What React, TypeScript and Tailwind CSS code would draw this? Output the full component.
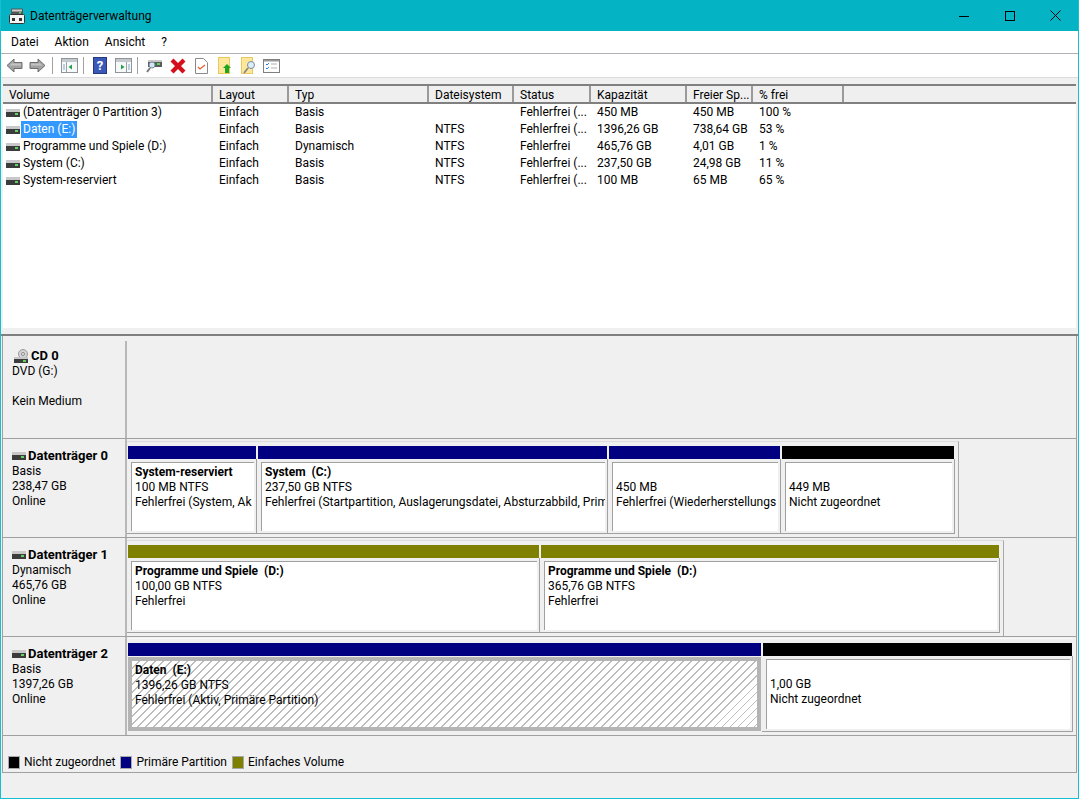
const font = "font-['Roboto',sans-serif]";

const HddIcon = () => (
  <svg width="14" height="8" viewBox="0 0 14 8" className="shrink-0">
    <rect x="0" y="0" width="14" height="3" fill="#c8c8c8" />
    <rect x="0" y="3" width="14" height="5" fill="#3c3c3c" />
    <rect x="9" y="4" width="3" height="2" fill="#5fd35f" />
  </svg>
);

const CdIcon = () => (
  <svg width="15" height="14" viewBox="0 0 15 14" className="shrink-0">
    <circle cx="9" cy="5" r="4.5" fill="#d4d4d4" stroke="#9a9a9a" />
    <circle cx="9" cy="5" r="1.5" fill="#f4f4f4" stroke="#888" />
    <rect x="0" y="8" width="14" height="2" fill="#c8c8c8" />
    <rect x="0" y="10" width="14" height="4" fill="#3c3c3c" />
    <rect x="9" y="11" width="3" height="2" fill="#5fd35f" />
  </svg>
);

const Sep = ({ className }: { className: string }) => <div className={`w-[1px] h-[17px] bg-[#a0a0a0] shrink-0 ${className}`} />;

const WinIcon = ({ flip, className }: { flip?: boolean; className: string }) => (
  <svg width="17" height="15" viewBox="0 0 17 15" className={`shrink-0 ${className}`}>
    <rect x="0.5" y="0.5" width="16" height="14" fill="#f6f8fa" stroke="#8f9499" />
    <rect x="1" y="1" width="15" height="3" fill="#c4c9ce" />
    <line x1={flip ? 11.5 : 5.5} y1="4" x2={flip ? 11.5 : 5.5} y2="14" stroke="#9aa0a6" />
    <path d={flip ? 'M6 6.5l3.5 2.5L6 11.5z' : 'M11 6.5L7.5 9l3.5 2.5z'} fill="#24a148" />
    <path d={flip ? 'M13 7h2M13 9h2M13 11h2' : 'M2 7h2M2 9h2M2 11h2'} stroke="#7fa8c9" />
  </svg>
);

const Toolbar = () => (
  <div className="flex items-center h-[23px] pl-[5px] bg-white">
    <svg width="17" height="15" viewBox="0 0 17 15" className="shrink-0">
      <path d="M1 7.5L8 1v3.5h8v6H8V14z" fill="#a2a2a2" stroke="#6e6e6e" />
      <path d="M3.5 7.5L7 4.500v1h8v2H7z" fill="#c4c4c4" />
    </svg>
    <svg width="17" height="15" viewBox="0 0 17 15" className="ml-[6px] shrink-0">
      <path d="M16 7.5L9 1v3.500H1v6h8V14z" fill="#a2a2a2" stroke="#6e6e6e" />
      <path d="M13.500 7.500L10 4.500v1H2v2h8z" fill="#c4c4c4" />
    </svg>
    <Sep className="ml-[6px]" />
    <WinIcon className="ml-[8px]" />
    <Sep className="ml-[5px]" />
    <div className="ml-[9px] w-[14px] h-[17px] shrink-0 bg-[#3a58b8] border border-[#26387e] text-white text-[13px] leading-[15px] font-bold text-center">?</div>
    <WinIcon flip className="ml-[8px]" />
    <Sep className="ml-[5px]" />
    <svg width="16" height="15" viewBox="0 0 16 15" className="ml-[8px] shrink-0">
      <rect x="2" y="4" width="14" height="5" fill="#5a5a5a" />
      <rect x="2" y="2" width="14" height="2" fill="#c8c8c8" />
      <rect x="11" y="5" width="3" height="2" fill="#5fd35f" />
      <circle cx="6" cy="7" r="3" fill="#cfe6f5" stroke="#7a8894" />
      <line x1="4" y1="10" x2="1" y2="14" stroke="#7a7a7a" strokeWidth="2" />
    </svg>
    <svg width="16" height="16" viewBox="0 0 16 16" className="ml-[8px] shrink-0">
      <path d="M0.500 3.500l3-3L8 5l4.500-4.500 3 3L11 8l4.500 4.500-3 3L8 11l-4.500 4.500-3-3L5 8z" fill="#d4101c" />
    </svg>
    <svg width="13" height="16" viewBox="0 0 13 16" className="ml-[9px] shrink-0">
      <path d="M0.500 0.500h8l4 4v11h-12z" fill="#fff" stroke="#8a8a8a" />
      <path d="M3 9l2 2 5-4" fill="none" stroke="#e8602c" strokeWidth="1.3" />
    </svg>
    <svg width="14" height="17" viewBox="0 0 14 17" className="ml-[10px] shrink-0">
      <rect x="0.500" y="0.500" width="11" height="16" fill="#fde79a" stroke="#e8c860" />
      <path d="M9 7l4 4h-2v5H7v-5H5z" fill="#1fa51f" />
    </svg>
    <svg width="15" height="17" viewBox="0 0 15 17" className="ml-[9px] shrink-0">
      <rect x="0.500" y="0.500" width="11" height="16" fill="#fde79a" stroke="#e8c860" />
      <circle cx="10" cy="8" r="3.500" fill="#dceefa" stroke="#7a8a9a" />
      <line x1="7" y1="11" x2="3" y2="16" stroke="#8a8a8a" strokeWidth="2" />
    </svg>
    <svg width="17" height="14" viewBox="0 0 17 14" className="ml-[7px] shrink-0">
      <rect x="0.500" y="0.500" width="16" height="13" fill="#fff" stroke="#7f7f7f" />
      <rect x="1" y="1" width="15" height="1.500" fill="#9a9a9a" />
      <path d="M3 5l1 1 2-2M3 9l1 1 2-2" fill="none" stroke="#2b7fd8" />
      <path d="M8 5h6M8 9h6" stroke="#b0b0b0" />
    </svg>
  </div>
);

const columns = [
  { name: 'Volume', w: 'w-[210px]' },
  { name: 'Layout', w: 'w-[76px]' },
  { name: 'Typ', w: 'w-[140px]' },
  { name: 'Dateisystem', w: 'w-[85px]' },
  { name: 'Status', w: 'w-[77px]' },
  { name: 'Kapazität', w: 'w-[96px]' },
  { name: 'Freier Sp...', w: 'w-[66px]' },
  { name: '% frei', w: 'w-[91px]' },
];

const rows = [
  ['(Datenträger 0 Partition 3)', 'Einfach', 'Basis', '', 'Fehlerfrei (...', '450 MB', '450 MB', '100 %'],
  ['Daten (E:)', 'Einfach', 'Basis', 'NTFS', 'Fehlerfrei (...', '1396,26 GB', '738,64 GB', '53 %'],
  ['Programme und Spiele (D:)', 'Einfach', 'Dynamisch', 'NTFS', 'Fehlerfrei', '465,76 GB', '4,01 GB', '1 %'],
  ['System (C:)', 'Einfach', 'Basis', 'NTFS', 'Fehlerfrei (...', '237,50 GB', '24,98 GB', '11 %'],
  ['System-reserviert', 'Einfach', 'Basis', 'NTFS', 'Fehlerfrei (...', '100 MB', '65 MB', '65 %'],
];

const VolumeList = () => (
  <div className="h-[244px] shrink-0 mx-[2px] bg-white flex flex-col">
    <div className="flex h-[20px] bg-[#efefef] border-t-2 border-b-2 border-t-[#808080] border-b-[#808080]">
      {columns.map((c) => (
        <div key={c.name} className={`${c.w} pl-[6px] border-r-2 border-[#9a9a9a] leading-[18px] truncate`}>{c.name}</div>
      ))}
    </div>
    <div>
      {rows.map((r, i) => (
        <div key={r[0]} className="flex h-[17px] leading-[17px]">
          {r.map((cell, j) =>
            j === 0 ? (
              <div key={j} className="w-[210px] flex items-center pl-[3px]">
                <HddIcon />
                {i === 1 ? (
                  <span className="ml-[1px] px-[2px] bg-[#3399ff] text-white">{cell}</span>
                ) : (
                  <span className="ml-[3px]">{cell}</span>
                )}
              </div>
            ) : (
              <div key={j} className={`${columns[j].w} pl-[6px] truncate`}>{cell}</div>
            ),
          )}
        </div>
      ))}
    </div>
  </div>
);

const colors = { navy: 'bg-[#000080]', black: 'bg-black', olive: 'bg-[#808000]' };

type Part = {
  w: string;
  color: keyof typeof colors;
  title?: string;
  lines: string[];
  hatched?: boolean;
};

const PartText = ({ p }: { p: Part }) => (
  <>
    <div className="h-[15px] leading-[15px] font-bold whitespace-pre">{p.title ?? ''}</div>
    {p.lines.map((l) => (
      <div key={l} className="h-[15px] leading-[15px]">{l}</div>
    ))}
  </>
);

const Partition = ({ p }: { p: Part }) => (
  <div className={`${p.w} shrink-0 flex flex-col`}>
    <div className={`h-[13px] shrink-0 ${colors[p.color]} mx-[1px]`} />
    {p.hatched ? (
      <div className="flex-1 min-h-0 flex p-[1px]">
        <div className="flex-1 min-w-0 border-[4px] border-[#b4b4b4] overflow-hidden pl-[3px] pt-[2px] whitespace-nowrap bg-[repeating-linear-gradient(135deg,#ffffff_0px,#ffffff_4.700px,#bdbdbd_4.700px,#bdbdbd_5.660px)]">
          <PartText p={p} />
        </div>
      </div>
    ) : (
      <div className="flex-1 min-h-0 flex border-b border-r border-[#a0a0a0] pl-[4px] pt-[3px] pr-[2px] pb-[2px]">
        <div className="flex-1 min-w-0 overflow-hidden pl-[3px] pt-[2px] whitespace-nowrap bg-white border-t border-l border-[#a0a0a0]">
          <PartText p={p} />
        </div>
      </div>
    )}
  </div>
);

type Disk = {
  title: string;
  lines: string[];
  parts: Part[];
  frame: boolean;
};

const disks: Disk[] = [
  {
    title: 'Datenträger 0',
    lines: ['Basis', '238,47 GB', 'Online'],
    frame: true,
    parts: [
      { w: 'w-[130px]', color: 'navy', title: 'System-reserviert', lines: ['100 MB NTFS', 'Fehlerfrei (System, Ak'] },
      { w: 'w-[351px]', color: 'navy', title: 'System  (C:)', lines: ['237,50 GB NTFS', 'Fehlerfrei (Startpartition, Auslagerungsdatei, Absturzabbild, Prim'] },
      { w: 'w-[173px]', color: 'navy', lines: ['450 MB', 'Fehlerfrei (Wiederherstellungs'] },
      { w: 'w-[174px]', color: 'black', lines: ['449 MB', 'Nicht zugeordnet'] },
    ],
  },
  {
    title: 'Datenträger 1',
    lines: ['Dynamisch', '465,76 GB', 'Online'],
    frame: true,
    parts: [
      { w: 'w-[413px]', color: 'olive', title: 'Programme und Spiele  (D:)', lines: ['100,00 GB NTFS', 'Fehlerfrei'] },
      { w: 'w-[460px]', color: 'olive', title: 'Programme und Spiele  (D:)', lines: ['365,76 GB NTFS', 'Fehlerfrei'] },
    ],
  },
  {
    title: 'Datenträger 2',
    lines: ['Basis', '1397,26 GB', 'Online'],
    frame: false,
    parts: [
      { w: 'w-[635px]', color: 'navy', title: 'Daten  (E:)', lines: ['1396,26 GB NTFS', 'Fehlerfrei (Aktiv, Primäre Partition)'], hatched: true },
      { w: 'w-[311px]', color: 'black', lines: ['1,00 GB', 'Nicht zugeordnet'] },
    ],
  },
];

const DiskRow = ({ d }: { d: Disk }) => (
  <div className="flex h-[99px] border-b border-[#a0a0a0]">
    <div className="w-[124px] shrink-0 border-r-2 border-[#b8b8b8] pl-[9px] pt-[8px] leading-[15px]">
      <div className="flex items-center gap-[2px] h-[17px] font-bold">
        <HddIcon />
        <span className="text-[13px]">{d.title}</span>
      </div>
      {d.lines.map((l) => (
        <div key={l}>{l}</div>
      ))}
    </div>
    <div className="flex-1 min-w-0">
      {d.frame ? (
        <div className="inline-flex mt-[2px] h-[96px] pt-[4px] pb-[3px] pr-[3px] border-t border-r border-t-[#dcdcdc] border-r-[#a8a8a8]">
          {d.parts.map((p) => (
            <Partition key={p.lines[0]} p={p} />
          ))}
        </div>
      ) : (
        <div className="inline-flex mt-[1px] h-[97px] pt-[4px] pb-[3px] border-t border-t-[#f8f8f8]">
          {d.parts.map((p) => (
            <Partition key={p.lines[0]} p={p} />
          ))}
        </div>
      )}
    </div>
  </div>
);

const Legend = () => (
  <div className="h-[21px] shrink-0 flex items-center pl-[5px] border-b border-[#a0a0a0]">
    <div className="w-[12px] h-[13px] shrink-0 bg-black border border-[#a8a8a8]" />
    <span className="ml-[4px]">Nicht zugeordnet</span>
    <div className="ml-[5px] w-[12px] h-[13px] shrink-0 bg-[#000080] border border-[#a8a8a8]" />
    <span className="ml-[4px]">Primäre Partition</span>
    <div className="ml-[5px] w-[12px] h-[13px] shrink-0 bg-[#808000] border border-[#a8a8a8]" />
    <span className="ml-[4px]">Einfaches Volume</span>
  </div>
);

export default function App() {
  return (
    <div className={`${font} w-[1079px] h-[799px] flex flex-col overflow-hidden bg-[#f0f0f0] text-[12px] text-black border-x border-b border-[#16bfd0]`}>
      <div className="h-[31px] shrink-0 -mx-[1px] bg-[#04b4c4] flex items-center pl-[9px]">
        <svg width="16" height="16" viewBox="0 0 16 16" className="shrink-0">
          <rect x="2" y="0.500" width="12" height="6" rx="1" fill="#555" />
          <rect x="3" y="1.500" width="10" height="2" fill="#ccc" />
          <rect x="10" y="4" width="2" height="1.500" fill="#5fd35f" />
          <rect x="0.500" y="6.500" width="15" height="9" rx="1" fill="#f4f4f4" stroke="#333" />
          <rect x="3" y="10" width="3" height="3" fill="#333" />
          <rect x="10" y="10" width="3" height="3" fill="#333" />
        </svg>
        <span className="ml-[5px]">Datenträgerverwaltung</span>
        <div className="ml-auto flex items-center pr-[1px]">
          <div className="w-[46px] flex justify-center">
            <svg width="10" height="10" viewBox="0 0 10 10"><path d="M0 5.500h10" stroke="#000" /></svg>
          </div>
          <div className="w-[45px] flex justify-center">
            <svg width="10" height="10" viewBox="0 0 10 10"><rect x="0.500" y="0.500" width="9" height="9" fill="none" stroke="#000" /></svg>
          </div>
          <div className="w-[46px] flex justify-center">
            <svg width="11" height="11" viewBox="0 0 11 11"><path d="M0.500 0.500l10 10M10.500 0.500l-10 10" stroke="#000" /></svg>
          </div>
        </div>
      </div>
      <div className="h-[22px] shrink-0 bg-white flex items-center gap-[16px] pl-[10px]">
        <span>Datei</span>
        <span>Aktion</span>
        <span>Ansicht</span>
        <span>?</span>
      </div>
      <div className="h-[1px] shrink-0 bg-[#b0b0b8]" />
      <Toolbar />
      <div className="h-[7px] shrink-0 bg-[#f0f0f0] border-t border-[#dcdcdc]" />
      <VolumeList />
      <div className="h-[8px] shrink-0 border-b-2 border-[#808080] bg-[#f0f0f0]" />
      <div className="shrink-0 mx-[1px] border-x border-[#a0a0a0]">
        <div className="flex h-[103px] border-b border-[#a0a0a0]">
          <div className="w-[124px] shrink-0 mt-[5px] border-r-2 border-[#b8b8b8] pl-[9px] pt-[6px] leading-[15px]">
            <div className="flex items-center gap-[2px] h-[17px] font-bold">
              <div className="ml-[2px]"><CdIcon /></div>
              <span className="text-[13px]">CD 0</span>
            </div>
            <div>DVD (G:)</div>
            <div className="mt-[15px]">Kein Medium</div>
          </div>
        </div>
        {disks.map((d) => (
          <DiskRow key={d.title} d={d} />
        ))}
        <div className="h-[16px]" />
        <Legend />
      </div>
    </div>
  );
}
